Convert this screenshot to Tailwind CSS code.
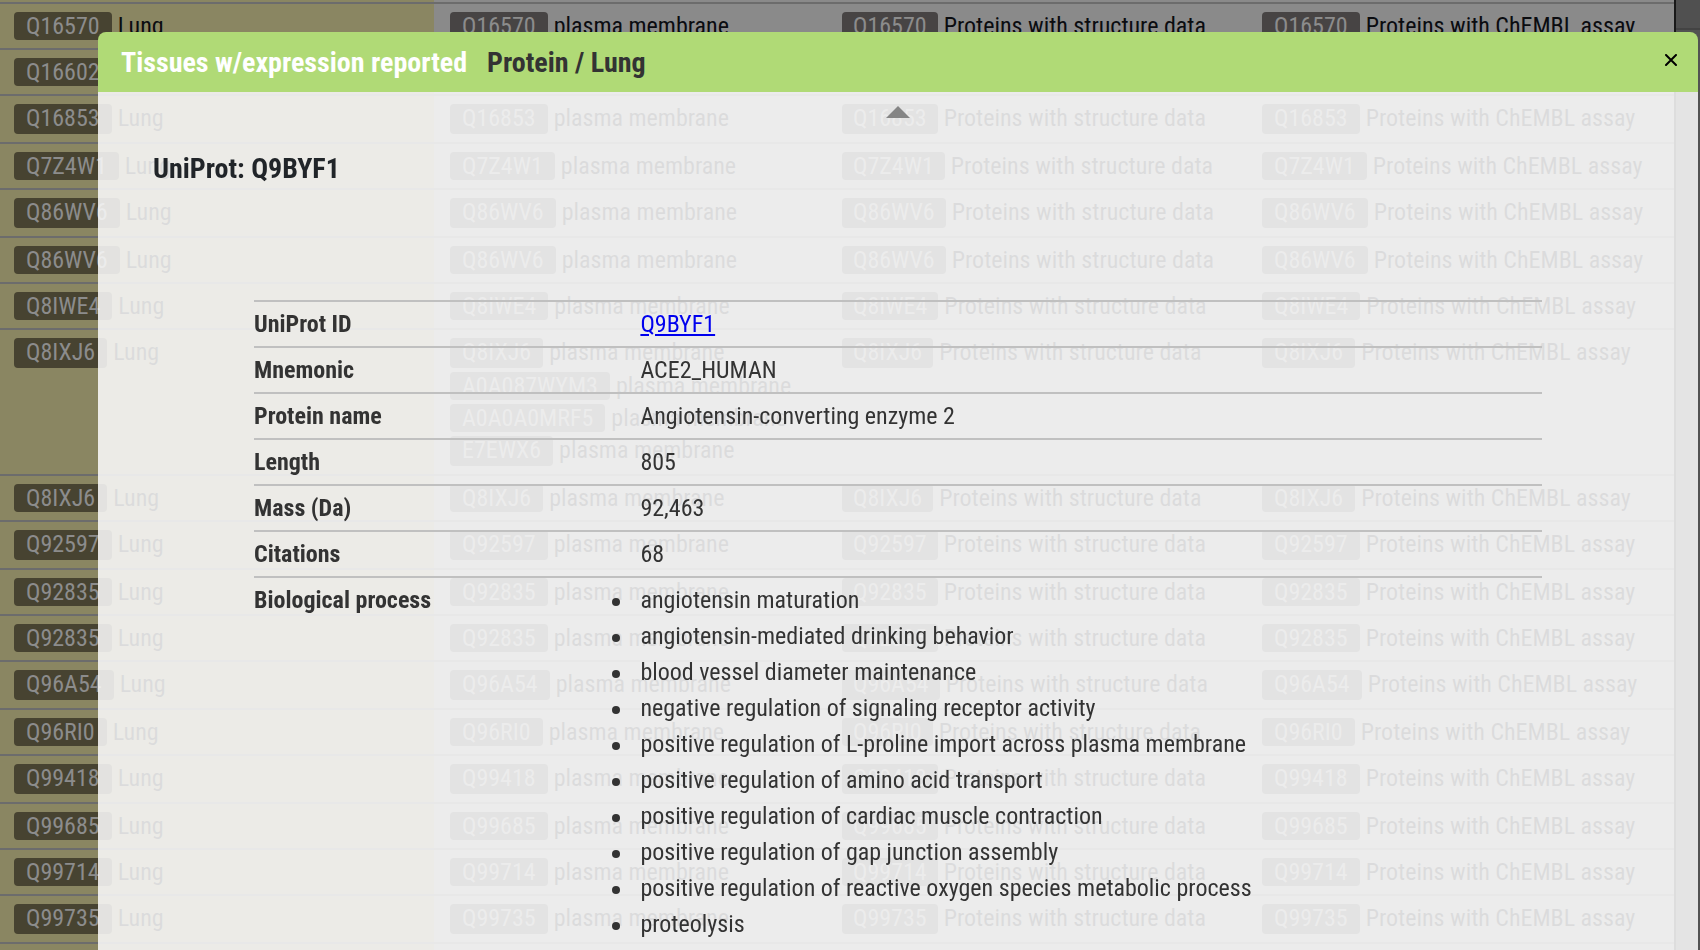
<!DOCTYPE html>
<html lang="en">
<head>
<meta charset="utf-8">
<title>UniProt: Q9BYF1</title>
<script src="https://cdn.jsdelivr.net/npm/@tailwindcss/browser@4"></script>
</head>
<body class="h-screen overflow-hidden bg-[#525252] font-['Roboto_Condensed','Liberation_Sans_Narrow',sans-serif] text-2xl text-[#0b0c10]">

<!-- Results page, dimmed behind the dialog -->
<div class="flex h-screen overflow-hidden" aria-hidden="true">
  <div class="min-w-0 flex-1 border-r-2 border-[#191919] bg-[#8a8a8a]">
    <table class="w-full table-fixed border-separate border-spacing-0">
      <colgroup><col class="w-[434px]"><col class="w-[394px]"><col class="w-[420px]"><col></colgroup>
      <tbody id="rows"></tbody>
    </table>
  </div>
  <div class="w-6 shrink-0">
    <div class="h-[30px] border-b-2 border-[#434343] bg-[#505050]"></div>
  </div>
</div>

<!-- Dialog -->
<div class="fixed inset-0 flex pt-8 pr-[2px] pl-[98px]">
  <section role="dialog" aria-labelledby="dialog-title" class="flex min-w-0 flex-1 flex-col overflow-hidden rounded-t-lg text-[#333333]">
    <header class="flex h-[60px] shrink-0 items-center justify-between bg-[#b0da76] pt-[2px] pr-[21px] pl-[23px]">
      <h1 id="dialog-title" class="flex gap-5 text-[28px] leading-9 font-bold"><span class="text-white">Tissues w/expression reported</span><span>Protein / Lung</span></h1>
      <button type="button" aria-label="Close" class="pb-[6px] text-black">
        <svg class="size-3" viewBox="0 0 12 12" fill="none" stroke="currentColor" stroke-width="2" stroke-linecap="round"><path d="M1 1l10 10M11 1L1 11"/></svg>
      </button>
    </header>
    <div class="flex-1 overflow-hidden bg-[#fafafa]/87 px-[55px]">
      <button type="button" aria-label="Scroll up" class="mx-auto mt-[14px] block">
        <svg class="h-3 w-6" viewBox="0 0 24 12"><path d="M12 0L24 12H0Z" fill="#858585"/></svg>
      </button>
      <h2 class="mt-[33px] text-[28px] leading-9 font-bold text-[#212529]">UniProt: Q9BYF1</h2>
      <div class="mt-[113px] px-[101px]">
        <table class="w-full table-fixed border-separate border-spacing-0 text-left align-top leading-9">
          <colgroup><col class="w-[30%]"><col></colgroup>
          <tbody>
            <tr><th scope="row" class="border-t-2 border-[#c0c0c0] py-1 align-top">UniProt ID</th><td class="border-t-2 border-[#c0c0c0] py-1"><a href="#Q9BYF1" class="text-[#0000ee] underline">Q9BYF1</a></td></tr>
            <tr><th scope="row" class="border-t-2 border-[#c0c0c0] py-1 align-top">Mnemonic</th><td class="border-t-2 border-[#c0c0c0] py-1">ACE2_HUMAN</td></tr>
            <tr><th scope="row" class="border-t-2 border-[#c0c0c0] py-1 align-top">Protein name</th><td class="border-t-2 border-[#c0c0c0] py-1">Angiotensin-converting enzyme 2</td></tr>
            <tr><th scope="row" class="border-t-2 border-[#c0c0c0] py-1 align-top">Length</th><td class="border-t-2 border-[#c0c0c0] py-1">805</td></tr>
            <tr><th scope="row" class="border-t-2 border-[#c0c0c0] py-1 align-top">Mass (Da)</th><td class="border-t-2 border-[#c0c0c0] py-1">92,463</td></tr>
            <tr><th scope="row" class="border-t-2 border-[#c0c0c0] py-1 align-top">Citations</th><td class="border-t-2 border-[#c0c0c0] py-1">68</td></tr>
            <tr><th scope="row" class="border-t-2 border-[#c0c0c0] py-1 align-top">Biological process</th><td class="border-t-2 border-[#c0c0c0] py-1">
              <ul class="-ml-7 [&>li]:flex [&>li]:items-center [&>li]:gap-5 [&>li]:before:mt-1 [&>li]:before:size-2 [&>li]:before:rounded-full [&>li]:before:bg-[#333333] [&>li]:before:content-['']">
                <li>angiotensin maturation</li>
                <li>angiotensin-mediated drinking behavior</li>
                <li>blood vessel diameter maintenance</li>
                <li>negative regulation of signaling receptor activity</li>
                <li>positive regulation of L-proline import across plasma membrane</li>
                <li>positive regulation of amino acid transport</li>
                <li>positive regulation of cardiac muscle contraction</li>
                <li>positive regulation of gap junction assembly</li>
                <li>positive regulation of reactive oxygen species metabolic process</li>
                <li>proteolysis</li>
                <li>receptor-mediated virion attachment to host cell</li>
              </ul></td></tr>
          </tbody>
        </table>
      </div>
    </div>
  </section>
</div>

<script>
  // [protein id, tall row, further ids listed in the second column]
  const proteins = [
    ['Q16570', 0], ['Q16602', 0], ['Q16853', 1], ['Q7Z4W1', 0], ['Q86WV6', 1], ['Q86WV6', 0], ['Q8IWE4', 0],
    ['Q8IXJ6', 1, ['A0A087WYM3', 'A0A0A0MRF5', 'E7EWX6']],
    ['Q8IXJ6', 0], ['Q92597', 1], ['Q92835', 0], ['Q92835', 0], ['Q96A54', 1], ['Q96RI0', 0], ['Q99418', 1],
    ['Q99685', 0], ['Q99714', 0], ['Q99735', 1]
  ];
  const entry = (id, label, badge, tall) =>
    `<div class="flex items-start gap-[6px] leading-7 whitespace-nowrap"><span class="${tall ? 'h-[30px]' : 'h-7'} rounded text-[#8c8c8c] ${badge}">${id}</span><span>${label}</span></div>`;
  const olive = 'bg-[#474331] px-3', grey = 'bg-[#474444] px-3', slim = 'bg-[#474444] px-[11px]';
  const cell = (pad, inner) => `<td class="border-t-2 border-[#6c6c6c] pt-2 align-top ${pad}">${inner}</td>`;
  let html = '<tr class="h-[2px]"><td class="bg-[#8a8662]"></td><td></td><td></td><td></td></tr>';
  for (const [id, tall, more] of proteins) {
    let second = entry(id, 'plasma membrane', grey, tall);
    if (more) second = '<div class="flex flex-col gap-1">' + second + more.map(m => entry(m, 'plasma membrane', grey, m === 'E7EWX6')).join('') + '</div>';
    html += `<tr class="${more ? 'h-[146px]' : tall ? 'h-12' : 'h-[46px]'}">`
      + cell('bg-[#8a8662] pl-[14px]', entry(id, 'Lung', olive, tall))
      + cell('pl-4', second)
      + cell('pl-[14px]', entry(id, 'Proteins with structure data', slim, tall))
      + cell('pl-[14px]', entry(id, 'Proteins with ChEMBL assay', grey, tall)) + '</tr>';
  }
  html += '<tr class="h-12">' + cell('bg-[#8a8662]', '') + cell('', '') + cell('', '') + cell('', '') + '</tr>';
  document.getElementById('rows').innerHTML = html;
</script>
</body>
</html>
